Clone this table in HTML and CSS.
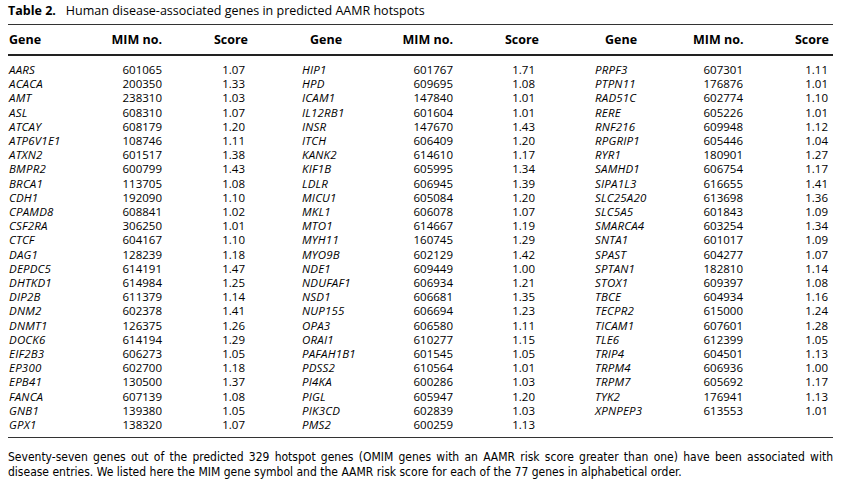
FILE: index.html
```html
<!DOCTYPE html>
<html lang="en">
<head>
<meta charset="utf-8">
<title>Table 2</title>
<link rel="stylesheet" href="styles.css">
</head>
<body>
<div class="page">
  <div class="caption"><span class="label">Table 2.</span><span class="caption-text">Human disease-associated genes in predicted AAMR hotspots</span></div>
  <table class="genes">
    <colgroup>
      <col class="w-g1"><col class="w-m1"><col class="w-s1">
      <col class="w-g2"><col class="w-m2"><col class="w-s2">
      <col class="w-g3"><col class="w-m3"><col class="w-s3">
    </colgroup>
    <thead>
      <tr>
        <th class="h-gene h-gene1">Gene</th><th class="h-mim">MIM no.</th><th class="h-score">Score</th>
        <th class="h-gene h-gene2">Gene</th><th class="h-mim">MIM no.</th><th class="h-score">Score</th>
        <th class="h-gene h-gene3">Gene</th><th class="h-mim">MIM no.</th><th class="h-score h-last">Score</th>
      </tr>
    </thead>
    <tbody id="rows"></tbody>
  </table>
  <p class="note">Seventy-seven genes out of the predicted 329 hotspot genes (OMIM genes with an AAMR risk score greater than one) have been associated with disease entries. We listed here the MIM gene symbol and the AAMR risk score for each of the 77 genes in alphabetical order.</p>
</div>
<script src="script.js"></script>
</body>
</html>
```

FILE: script.js
```js
var c1 = [
["AARS","601065","1.07"],["ACACA","200350","1.33"],["AMT","238310","1.03"],["ASL","608310","1.07"],
["ATCAY","608179","1.20"],["ATP6V1E1","108746","1.11"],["ATXN2","601517","1.38"],["BMPR2","600799","1.43"],
["BRCA1","113705","1.08"],["CDH1","192090","1.10"],["CPAMD8","608841","1.02"],["CSF2RA","306250","1.01"],
["CTCF","604167","1.10"],["DAG1","128239","1.18"],["DEPDC5","614191","1.47"],["DHTKD1","614984","1.25"],
["DIP2B","611379","1.14"],["DNM2","602378","1.41"],["DNMT1","126375","1.26"],["DOCK6","614194","1.29"],
["EIF2B3","606273","1.05"],["EP300","602700","1.18"],["EPB41","130500","1.37"],["FANCA","607139","1.08"],
["GNB1","139380","1.05"],["GPX1","138320","1.07"]];
var c2 = [
["HIP1","601767","1.71"],["HPD","609695","1.08"],["ICAM1","147840","1.01"],["IL12RB1","601604","1.01"],
["INSR","147670","1.43"],["ITCH","606409","1.20"],["KANK2","614610","1.17"],["KIF1B","605995","1.34"],
["LDLR","606945","1.39"],["MICU1","605084","1.20"],["MKL1","606078","1.07"],["MTO1","614667","1.19"],
["MYH11","160745","1.29"],["MYO9B","602129","1.42"],["NDE1","609449","1.00"],["NDUFAF1","606934","1.21"],
["NSD1","606681","1.35"],["NUP155","606694","1.23"],["OPA3","606580","1.11"],["ORAI1","610277","1.15"],
["PAFAH1B1","601545","1.05"],["PDSS2","610564","1.01"],["PI4KA","600286","1.03"],["PIGL","605947","1.20"],
["PIK3CD","602839","1.03"],["PMS2","600259","1.13"]];
var c3 = [
["PRPF3","607301","1.11"],["PTPN11","176876","1.01"],["RAD51C","602774","1.10"],["RERE","605226","1.01"],
["RNF216","609948","1.12"],["RPGRIP1","605446","1.04"],["RYR1","180901","1.27"],["SAMHD1","606754","1.17"],
["SIPA1L3","616655","1.41"],["SLC25A20","613698","1.36"],["SLC5A5","601843","1.09"],["SMARCA4","603254","1.34"],
["SNTA1","601017","1.09"],["SPAST","604277","1.07"],["SPTAN1","182810","1.14"],["STOX1","609397","1.08"],
["TBCE","604934","1.16"],["TECPR2","615000","1.24"],["TICAM1","607601","1.28"],["TLE6","612399","1.05"],
["TRIP4","604501","1.13"],["TRPM4","606936","1.00"],["TRPM7","605692","1.17"],["TYK2","176941","1.13"],
["XPNPEP3","613553","1.01"]];
var body = document.getElementById("rows");
var html = "";
for (var i = 0; i < 26; i++) {
  var cls = i === 0 ? "first" : (i === 25 ? "last" : "");
  html += '<tr class="' + cls + '">';
  [c1, c2, c3].forEach(function (col, k) {
    var r = col[i] || ["", "", ""];
    html += '<td class="gene gene' + (k + 1) + '">' + r[0] + '</td>' +
            '<td class="mim">' + r[1] + '</td>' +
            '<td class="score score' + (k + 1) + '">' + r[2] + '</td>';
  });
  html += '</tr>';
}
body.innerHTML = html;
```

FILE: styles.css
```css
html, body {
  margin: 0;
  padding: 0;
  background: #ffffff;
}
body {
  color: #000000;
  font-family: "Open Sans", "DejaVu Sans", sans-serif;
}
.page {
  width: 825px;
  padding: 3px 0 0 8px;
}
.caption {
  font-size: 12.5px;
  line-height: 16px;
  padding-bottom: 5px;
  border-bottom: 1px solid #333333;
  white-space: nowrap;
}
.caption .label {
  font-weight: 700;
  margin-right: 10px;
}
.genes {
  width: 825px;
  border-collapse: collapse;
  table-layout: fixed;
}
.w-g1 { width: 92px; }
.w-m1 { width: 62px; }
.w-s1 { width: 86px; }
.w-g2 { width: 152px; }
.w-m2 { width: 53px; }
.w-s2 { width: 86px; }
.w-g3 { width: 154px; }
.w-m3 { width: 50px; }
.w-s3 { width: 90px; }
.genes th {
  font-size: 12.5px;
  font-weight: 700;
  line-height: 16px;
  padding: 7px 0 6px 0;
  border-bottom: 2px solid #222222;
  white-space: nowrap;
}
.genes th.h-gene { text-align: left; }
.genes th.h-gene1 { padding-left: 1px; }
.genes th.h-gene2 { padding-left: 62px; }
.genes th.h-gene3 { padding-left: 66px; }
.genes th.h-mim { text-align: right; }
.genes th.h-score { text-align: right; }
.genes th.h-last { padding-right: 4px; }
.genes td {
  font-size: 11.5px;
  line-height: 14.2px;
  padding: 0;
  white-space: nowrap;
}
.genes tr.first td { padding-top: 7px; }
.genes tr.last td { padding-bottom: 5px; border-bottom: 1.5px solid #333333; }
.genes td.gene { font-style: italic; text-align: left; letter-spacing: 0.2px; }
.genes td.gene1 { padding-left: 1px; }
.genes td.gene2 { padding-left: 54px; }
.genes td.gene3 { padding-left: 56px; }
.genes td.mim { text-align: right; }
.genes td.score { text-align: right; padding-right: 3px; }
.genes td.score2 { padding-right: 4px; }
.genes td.score3 { padding-right: 5px; }
.note {
  margin: 12px 0 0 0;
  font-family: "Liberation Sans Narrow", "DejaVu Sans Condensed", "Open Sans", sans-serif;
  font-size: 12px;
  line-height: 15px;
  text-align: justify;
}
```
